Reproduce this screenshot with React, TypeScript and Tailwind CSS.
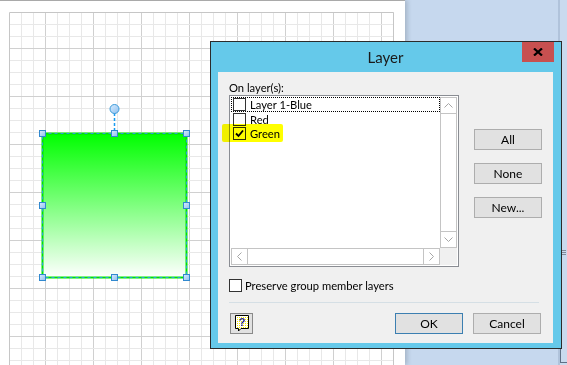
import React from 'react';

const GRID_W = 385;
const GRID_H = 360;

function PageGrid() {
  const lines: React.ReactNode[] = [];
  for (let k = 1; k * 12 < GRID_W; k++) {
    const v = k * 12;
    const major = (v - 36) % 48 === 0;
    lines.push(
      <line key={'v' + k} x1={v + 0.5} y1={0} x2={v + 0.5} y2={GRID_H} stroke={major ? '#d0d0d0' : '#e8e8e8'} />
    );
  }
  for (let k = 1; k * 12 < GRID_H; k++) {
    const v = k * 12;
    const major = (v - 36) % 48 === 0;
    lines.push(
      <line key={'h' + k} x1={0} y1={v + 0.5} x2={GRID_W} y2={v + 0.5} stroke={major ? '#d0d0d0' : '#e8e8e8'} />
    );
  }
  return (
    <svg width={GRID_W} height={GRID_H} className="block">
      {lines}
      <path d={`M0.5 ${GRID_H} V0.5 H${GRID_W - 0.5} V${GRID_H}`} fill="none" stroke="#c6c6c6" />
    </svg>
  );
}

function Handle({ x, y }: { x: number; y: number }) {
  return <rect x={x - 3} y={y - 3} width={6} height={6} fill="url(#hdl)" stroke="#3189cf" strokeWidth={1} />;
}

function GreenShape() {
  const l = 6.5, t = 32.5, r = 150.5, b = 176.5;
  const cx = (l + r) / 2, cy = (t + b) / 2;
  return (
    <svg width={160} height={185} className="absolute left-[36px] top-[100px]">
      <defs>
        <linearGradient id="grn" x1="0" y1="0" x2="0" y2="1">
          <stop offset="0" stopColor="#00ff00" />
          <stop offset="1" stopColor="#ffffff" />
        </linearGradient>
        <linearGradient id="hdl" x1="0" y1="0" x2="1" y2="1">
          <stop offset="0" stopColor="#d8ecff" />
          <stop offset="1" stopColor="#8fc0ee" />
        </linearGradient>
      </defs>
      <rect x={l} y={t} width={r - l} height={b - t} fill="url(#grn)" stroke="#00e600" strokeWidth={2} />
      <rect x={l} y={t} width={r - l} height={b - t} fill="none" stroke="#2a9be0" strokeWidth={1} strokeDasharray="3 3" />
      <line x1={cx} y1={12} x2={cx} y2={t - 3} stroke="#1a9bf0" strokeWidth={1.5} strokeDasharray="3 2" />
      <circle cx={cx} cy={8} r={4.5} fill="url(#hdl)" stroke="#3a9ad9" />
      <Handle x={l} y={t} />
      <Handle x={cx} y={t} />
      <Handle x={r} y={t} />
      <Handle x={l} y={cy} />
      <Handle x={r} y={cy} />
      <Handle x={l} y={b} />
      <Handle x={cx} y={b} />
      <Handle x={r} y={b} />
    </svg>
  );
}

function Chevron({ dir }: { dir: 'up' | 'down' | 'left' | 'right' }) {
  const d = {
    up: 'M0.5 4.5 L4.5 0.5 L8.5 4.5',
    down: 'M0.5 0.5 L4.5 4.5 L8.5 0.5',
    left: 'M4.5 0.5 L0.5 4.5 L4.5 8.5',
    right: 'M0.5 0.5 L4.5 4.5 L0.5 8.5',
  }[dir];
  const horiz = dir === 'up' || dir === 'down';
  return (
    <svg width={horiz ? 9 : 5} height={horiz ? 5 : 9}>
      <path d={d} fill="none" stroke="#a6a6a6" strokeWidth={1} />
    </svg>
  );
}

function CheckBox({ checked }: { checked?: boolean }) {
  return (
    <span className="w-[13px] h-[13px] border border-[#333333] bg-white flex items-center justify-center shrink-0">
      {checked && (
        <svg width={9} height={9}>
          <path d="M1 4.5 L3.5 7 L8 1.5" fill="none" stroke="#000" strokeWidth={1.8} />
        </svg>
      )}
    </span>
  );
}

function Button({ children, primary }: { children: React.ReactNode; primary?: boolean }) {
  return (
    <button
      className={
        primary
          ? 'w-[68px] h-[21px] bg-[#e1e1e1] border border-[#3c7fb1] text-[12px] leading-none text-black'
          : 'w-[68px] h-[21px] bg-[#e1e1e1] border border-[#adadad] text-[12px] leading-none text-black'
      }
    >
      {children}
    </button>
  );
}

const layers = [
  { name: 'Layer 1-Blue', checked: false, focus: true },
  { name: 'Red', checked: false },
  { name: 'Green', checked: true },
];

function LayerDialog() {
  return (
    <div className="absolute z-20 left-[210px] top-[41px] w-[352px] h-[308px] border border-[#2b2b2b] bg-[#65c9ea] flex flex-col pl-[7px] pr-[8px] pb-[5px] font-['Lato','Liberation_Sans',sans-serif] text-black">
      {/* Title bar */}
      <div className="relative h-[30px] flex items-center justify-center text-[15px] text-[#1a1a1a]">
        Layer
        <div className="absolute right-[-1px] top-0 w-[32px] h-[20px] bg-[#c75050] flex items-center justify-center">
          <svg width={10} height={8}>
            <path d="M1 0.5 L9 7.5 M9 0.5 L1 7.5" stroke="#000" strokeWidth={2.2} />
          </svg>
        </div>
      </div>

      {/* Client area */}
      <div className="flex-1 bg-[#f0f0f0] px-[11px] pt-[8px] text-[11.2px] flex flex-col">
        <div className="h-[15px] leading-[15px]">On layer(s):</div>

        <div className="flex">
          {/* List box */}
          <div className="relative w-[231px] h-[172px] border border-[#8a8d93] bg-white p-px flex flex-col">
            <div className="flex flex-1">
              <div className="flex-1 flex flex-col">
                {layers.map((l) => (
                  <div
                    key={l.name}
                    className={
                      l.focus
                        ? 'h-[15px] flex items-center gap-[4px] pl-px border border-dotted border-black'
                        : 'h-[14.5px] flex items-center gap-[4px] pl-px border border-transparent'
                    }
                  >
                    <CheckBox checked={l.checked} />
                    <span className="leading-none">{l.name}</span>
                  </div>
                ))}
              </div>
              <div className="w-[17px] border border-[#c4c4c4] flex flex-col justify-between">
                <div className="h-[16px] border-b border-[#c4c4c4] flex items-center justify-center">
                  <Chevron dir="up" />
                </div>
                <div className="h-[16px] border-t border-[#c4c4c4] flex items-center justify-center">
                  <Chevron dir="down" />
                </div>
              </div>
            </div>
            <div className="flex h-[17px]">
              <div className="flex-1 border border-[#c4c4c4] flex justify-between">
                <div className="w-[16px] border-r border-[#c4c4c4] flex items-center justify-center">
                  <Chevron dir="left" />
                </div>
                <div className="w-[16px] border-l border-[#c4c4c4] flex items-center justify-center">
                  <Chevron dir="right" />
                </div>
              </div>
              <div className="w-[17px] bg-[#f0f0f0]" />
            </div>
            {/* highlighter mark */}
            <div className="absolute left-[-8px] top-[28px] w-[61px] h-[18px] bg-[#ffff00] mix-blend-multiply rounded-[2px]" />
          </div>

          {/* Side buttons */}
          <div className="ml-[15px] pt-[34px] flex flex-col gap-[13px]">
            <Button>All</Button>
            <Button>None</Button>
            <Button>New...</Button>
          </div>
        </div>

        <div className="mt-[12px] flex items-center gap-[3px]">
          <CheckBox />
          <span className="leading-none">Preserve group member layers</span>
        </div>

        <div className="mt-[10px] h-px bg-[#d5dfe5] mr-[3px]" />

        <div className="mt-[10px] flex items-center">
          <button className="ml-px w-[23px] h-[21px] bg-[#e1e1e1] border border-[#8a8a8a] flex items-center justify-center">
            <svg width={14} height={17}>
              <defs>
                <pattern id="dots" width={2} height={2} patternUnits="userSpaceOnUse">
                  <rect width={2} height={2} fill="#ffffff" />
                  <rect width={1} height={1} fill="#f2e600" />
                </pattern>
              </defs>
              <path d="M0.5 0.5 H13.5 V13.5 H6 L3.5 16 V13.5 H0.5 Z" fill="url(#dots)" stroke="#000" />
              <text x={7} y={11} textAnchor="middle" fontSize={11} fontWeight={700} fill="#1d1d8f" fontFamily="Liberation Sans, Arial, sans-serif">
                ?
              </text>
            </svg>
          </button>
          <div className="ml-auto flex gap-[10px] mr-px">
            <Button primary>OK</Button>
            <Button>Cancel</Button>
          </div>
        </div>
      </div>
    </div>
  );
}

export default function App() {
  return (
    <div className="relative w-[567px] h-[365px] overflow-hidden flex bg-[#c6d8ee]">
      {/* Drawing canvas */}
      <div className="relative z-10 w-[405px] h-full bg-white border-t border-[#a9a9a9] pl-[9px] pt-[11px] shadow-[2px_0_5px_rgba(0,0,0,0.18)]">
        <PageGrid />
        <GreenShape />
      </div>

      {/* Right side panel area */}
      <div className="flex-1 flex justify-end">
        <div className="w-[9px] h-full border-l-2 border-[#b0c3db] bg-[#c9daee] flex flex-col items-center">
          <svg width={5} height={6} className="mt-[250px]">
            <path d="M0 0.5 H5 M0 2.5 H5 M0 4.5 H5" stroke="#7f8a99" />
          </svg>
          <div className="mt-auto mb-[2px] w-full h-[16px] border-l border-b border-[#5f6f85]" />
        </div>
      </div>

      <LayerDialog />
    </div>
  );
}
